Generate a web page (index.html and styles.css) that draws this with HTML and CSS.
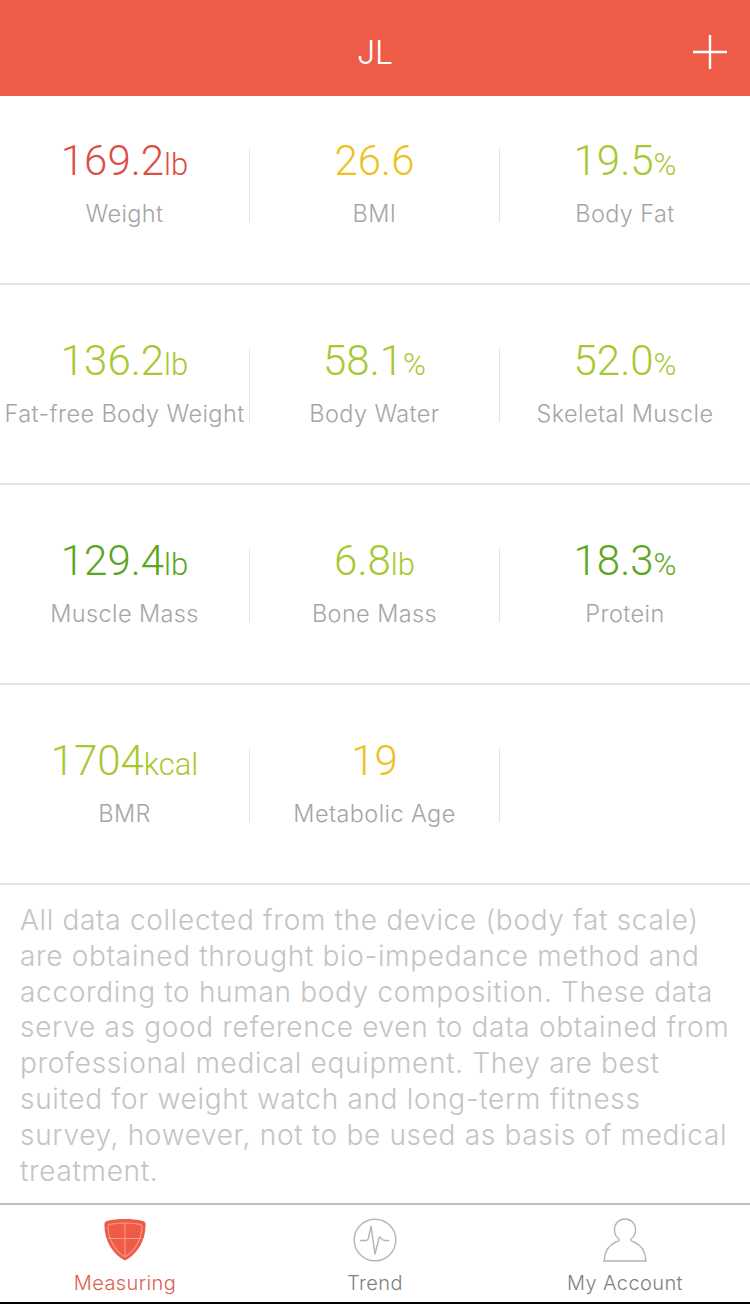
FILE: index.html
```html
<!DOCTYPE html>
<html lang="en">
<head>
    <meta charset="UTF-8">
    <meta name="viewport" content="width=device-width, initial-scale=1.0">
    <title>Measuring</title>
    <link rel="stylesheet" href="styles.css">
</head>
<body>
    <header class="top-bar">
        <span class="top-title">JL</span>
        <svg class="add-icon" width="36" height="36" viewBox="0 0 36 36">
            <path d="M18 1V35M1 18H35" stroke="#fff" stroke-width="2.4" fill="none"/>
        </svg>
    </header>

    <main class="metrics">
        <div class="metric-row">
            <div class="metric">
                <div class="value red">169.2<small>lb</small></div>
                <div class="label">Weight</div>
            </div>
            <div class="metric">
                <div class="value yellow">26.6</div>
                <div class="label">BMI</div>
            </div>
            <div class="metric">
                <div class="value lime">19.5<small>%</small></div>
                <div class="label">Body Fat</div>
            </div>
        </div>
        <div class="metric-row">
            <div class="metric">
                <div class="value lime">136.2<small>lb</small></div>
                <div class="label">Fat-free Body Weight</div>
            </div>
            <div class="metric">
                <div class="value lime">58.1<small>%</small></div>
                <div class="label">Body Water</div>
            </div>
            <div class="metric">
                <div class="value lime">52.0<small>%</small></div>
                <div class="label">Skeletal Muscle</div>
            </div>
        </div>
        <div class="metric-row">
            <div class="metric">
                <div class="value green">129.4<small>lb</small></div>
                <div class="label">Muscle Mass</div>
            </div>
            <div class="metric">
                <div class="value lime">6.8<small>lb</small></div>
                <div class="label">Bone Mass</div>
            </div>
            <div class="metric">
                <div class="value green">18.3<small>%</small></div>
                <div class="label">Protein</div>
            </div>
        </div>
        <div class="metric-row">
            <div class="metric">
                <div class="value lime">1704<small>kcal</small></div>
                <div class="label">BMR</div>
            </div>
            <div class="metric">
                <div class="value yellow">19</div>
                <div class="label">Metabolic Age</div>
            </div>
            <div class="metric"></div>
        </div>
    </main>

    <p class="note">All data collected from the device (body fat scale) are obtained throught bio-impedance method and according to human body composition. These data serve as good reference even to data obtained from professional medical equipment. They are best suited for weight watch and long-term fitness survey, however, not to be used as basis of medical treatment.</p>

    <nav class="tab-bar">
        <div class="tab active">
            <svg class="tab-icon" width="44" height="44" viewBox="0 0 44 44">
                <path d="M22 1C28 1 35 1.5 40 3C42 3.6 42.6 4.6 42.6 7C42.6 22 35 36 22 42.5C9 36 1.4 22 1.4 7C1.4 4.6 2 3.6 4 3C9 1.5 16 1 22 1Z" fill="#ee5c47"/>
                <path d="M22 5C27 5 32 5.5 37 6.4C38.6 6.7 39 7.4 39 9C38.6 21 32.5 32.5 22 38.8C11.5 32.5 5.4 21 5 9C5 7.4 5.4 6.7 7 6.4C12 5.5 17 5 22 5ZM22 5V38.8M5.2 20.5H38.8" fill="none" stroke="#f99885" stroke-width="1.1"/>
            </svg>
            <span>Measuring</span>
        </div>
        <div class="tab">
            <svg class="tab-icon" width="44" height="44" viewBox="0 0 44 44">
                <circle cx="22" cy="22" r="20.8" fill="none" stroke="#b4b4b4" stroke-width="1.4"/>
                <path d="M7 22.5H13.5C14.5 22.5 15 21.5 15.5 20L18 8L22 36L26 20C26.5 18.5 27.3 18.5 28 20C28.7 21.5 30 22.5 31.5 22.5H36" fill="none" stroke="#b4b4b4" stroke-width="1.4" stroke-linejoin="round"/>
            </svg>
            <span>Trend</span>
        </div>
        <div class="tab">
            <svg class="tab-icon" width="44" height="44" viewBox="0 0 44 44">
                <path d="M15.5 20.5C12.5 18.5 11.5 14.5 11.5 11.5C11.5 5.5 16 1 22 1C28 1 32.5 5.5 32.5 11.5C32.5 14.5 31.5 18.5 28.5 20.5C26.5 22.5 29 23 31 24C38 27 42.5 34 43 43H1C1.5 34 6 27 13 24C15 23 17.5 22.5 15.5 20.5Z" fill="none" stroke="#b4b4b4" stroke-width="1.4"/>
            </svg>
            <span>My Account</span>
        </div>
    </nav>
</body>
</html>
```

FILE: styles.css
```css
body {
    margin: 0;
    width: 750px;
    height: 1304px;
    overflow: hidden;
    display: flex;
    flex-direction: column;
    background-color: #fff;
    font-family: Inter, "Liberation Sans", sans-serif;
    font-weight: 300;
}

/* Top bar */
.top-bar {
    position: relative;
    height: 96px;
    flex: none;
    display: flex;
    align-items: center;
    justify-content: center;
    background-color: #ee5c47;
}
.top-title {
    color: #fff;
    font-size: 32px;
    padding-top: 8px;
}
.add-icon {
    position: absolute;
    top: 34px;
    right: 22px;
}

/* Metric grid */
.metric-row {
    display: grid;
    grid-template-columns: repeat(3, 250px);
    height: 200px;
    box-sizing: border-box;
    padding-top: 63px;
    border-bottom: 2px solid #e4e4e4;
}
.metric-row:first-child {
    height: 189px;
    padding-top: 52px;
}
.metric {
    height: 74px;
    text-align: center;
    white-space: nowrap;
    border-right: 1px solid #e4e4e4;
}
.metric:last-child {
    border-right: none;
}
.value {
    height: 26px;
    font-family: Roboto, sans-serif;
    font-size: 42px;
    line-height: 26px;
}
.value small {
    font-size: 31px;
}
.label {
    margin-top: 26px;
    color: #a6a6a6;
    font-size: 23.5px;
    line-height: 28px;
    letter-spacing: 0.4px;
}
.red { color: #dc4f47; }
.yellow { color: #eec11f; }
.lime { color: #a6c92f; }
.green { color: #5ba61c; }

/* Disclaimer */
.note {
    margin: 0;
    padding: 18px 15px 0 20px;
    flex: 1;
    color: #c4c4c4;
    font-size: 28px;
    line-height: 35.8px;
    letter-spacing: 0.68px;
}

/* Bottom tabs */
.tab-bar {
    height: 97px;
    flex: none;
    display: grid;
    grid-template-columns: repeat(3, 1fr);
    border-top: 2px solid #bdbdbd;
    border-bottom: 2px solid #000;
}
.tab {
    display: flex;
    flex-direction: column;
    align-items: center;
    padding-top: 13px;
    color: #808080;
    font-size: 20px;
    letter-spacing: 0.4px;
}
.tab span {
    margin-top: 9px;
}
.tab.active {
    color: #e0604e;
}
.tab-icon {
    display: block;
}
```
